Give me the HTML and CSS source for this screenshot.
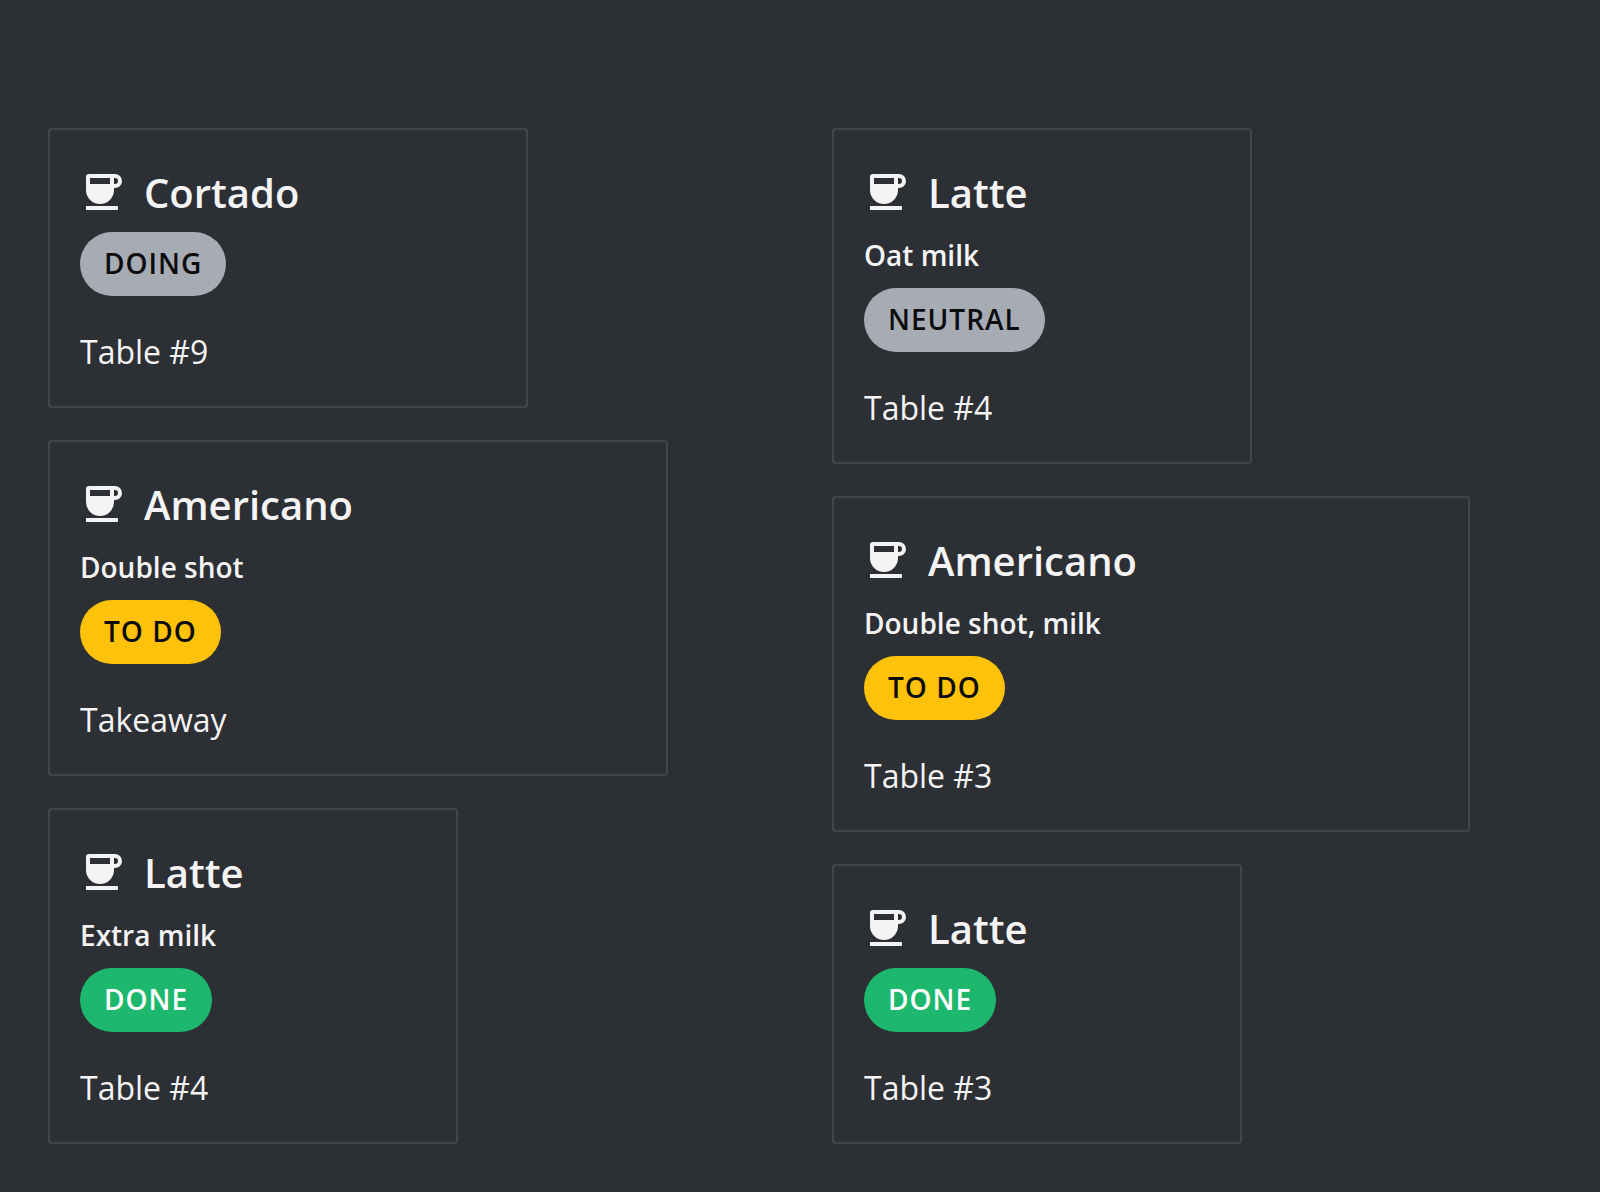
FILE: index.html
```html
<!DOCTYPE html>
<html lang="en">
<head>
<meta charset="utf-8">
<meta name="viewport" content="width=device-width, initial-scale=1">
<title>Coffee orders</title>
<link rel="stylesheet" href="styles.css">
</head>
<body>
<svg class="sprite" aria-hidden="true">
  <symbol id="cup" viewBox="0 0 24 24">
    <path fill-rule="evenodd" d="M4.500 3H17.500a3.500 3.500 0 0 1 0 7H17v1a7 7 0 0 1-14 0V4.500A1.500 1.500 0 0 1 4.500 3ZM5 5V8H15V5ZM17 5V8H17.500a1.500 1.500 0 0 0 0-3Z"/>
    <path d="M3 19H19V21H3Z"/>
  </symbol>
</svg>
<main class="board">
  <section class="column" aria-label="Orders, first column">
    <article class="card card-medium">
      <h2 class="title"><svg class="icon" aria-hidden="true"><use href="#cup"/></svg>Cortado</h2>
      <span class="badge badge-neutral">DOING</span>
      <p class="place">Table #9</p>
    </article>
    <article class="card card-large">
      <h2 class="title"><svg class="icon" aria-hidden="true"><use href="#cup"/></svg>Americano</h2>
      <p class="note">Double shot</p>
      <span class="badge badge-todo">TO DO</span>
      <p class="place">Takeaway</p>
    </article>
    <article class="card card-small">
      <h2 class="title"><svg class="icon" aria-hidden="true"><use href="#cup"/></svg>Latte</h2>
      <p class="note">Extra milk</p>
      <span class="badge badge-done">DONE</span>
      <p class="place">Table #4</p>
    </article>
  </section>
  <section class="column" aria-label="Orders, second column">
    <article class="card card-compact">
      <h2 class="title"><svg class="icon" aria-hidden="true"><use href="#cup"/></svg>Latte</h2>
      <p class="note">Oat milk</p>
      <span class="badge badge-neutral">NEUTRAL</span>
      <p class="place">Table #4</p>
    </article>
    <article class="card card-wide">
      <h2 class="title"><svg class="icon" aria-hidden="true"><use href="#cup"/></svg>Americano</h2>
      <p class="note">Double shot, milk</p>
      <span class="badge badge-todo">TO DO</span>
      <p class="place">Table #3</p>
    </article>
    <article class="card card-small">
      <h2 class="title"><svg class="icon" aria-hidden="true"><use href="#cup"/></svg>Latte</h2>
      <span class="badge badge-done">DONE</span>
      <p class="place">Table #3</p>
    </article>
  </section>
</main>
</body>
</html>
```
FILE: styles.css
```css
* {
  box-sizing: border-box;
}

body {
  margin: 0;
  background: #2c2f34;
  color: #f4f4f4;
  font-family: "Open Sans", sans-serif;
}

.sprite {
  display: none;
}

.board {
  display: grid;
  grid-template-columns: 1fr 1fr;
  gap: 64px;
  padding: 128px 48px 48px;
}

.column {
  display: flex;
  flex-direction: column;
  align-items: flex-start;
  gap: 32px;
}

.card {
  display: flex;
  flex-direction: column;
  align-items: flex-start;
  max-width: 100%;
  padding: 30px;
  border: 2px solid #42454a;
  border-radius: 4px;
}

.card-small {
  width: 410px;
}

.card-compact {
  width: 420px;
}

.card-medium {
  width: 480px;
}

.card-large {
  width: 620px;
}

.card-wide {
  width: 638px;
}

.title {
  display: flex;
  gap: 16px;
  margin: 0;
  padding: 8px 0 14px;
  font-size: 40px;
  font-weight: 600;
  line-height: 50px;
}

.icon {
  width: 48px;
  height: 48px;
  fill: currentColor;
}

.note {
  margin: 0 0 10px;
  font-size: 28px;
  font-weight: 600;
  line-height: 46px;
}

.badge {
  padding: 0 24px 2px;
  border-radius: 32px;
  font-size: 28px;
  font-weight: 600;
  line-height: 62px;
  letter-spacing: 1px;
}

.badge-neutral {
  background: #a7abb3;
  color: #0b0c0e;
}

.badge-todo {
  background: #ffc20a;
  color: #0b0c0e;
}

.badge-done {
  background: #1eb76e;
  color: #ffffff;
}

.place {
  margin: 32px 0 0;
  font-size: 32px;
  line-height: 48px;
}
```
